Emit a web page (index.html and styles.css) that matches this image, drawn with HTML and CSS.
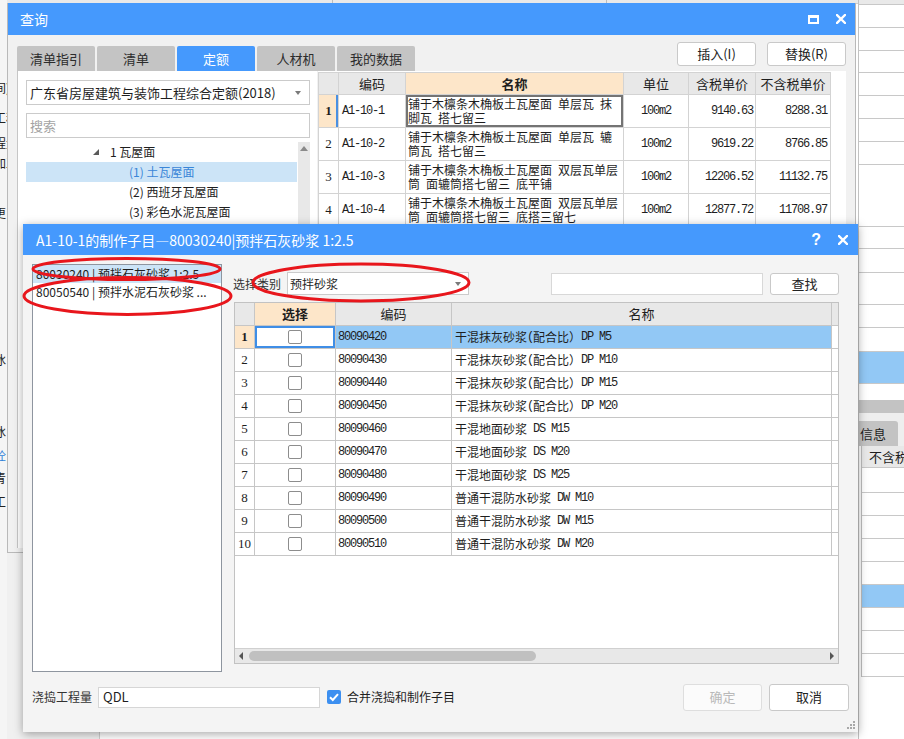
FILE: index.html
```html
<!DOCTYPE html>
<html lang="zh-CN">
<head>
<meta charset="utf-8">
<title>查询</title>
<link rel="stylesheet" href="styles.css">
</head>
<body>
<div class="desk">
  <div class="bg-left">
    <div class="bl l1">间)</div>
    <div class="bl l2">工程</div>
    <div class="bl l3">程量</div>
    <div class="bl l4">加工</div>
    <div class="bl l5">更</div>
    <div class="bl l6">冰</div>
    <div class="bl l7">冰</div>
    <div class="bl l8 blue">砼</div>
    <div class="bl l9">青</div>
    <div class="bl l10">工</div>
  </div>
  <div class="bg-mid">
    <div class="bg-top"><span class="c1"></span><span class="c2"></span></div>
    <div class="bg-fill"><div class="bg-fill-l"></div><div class="bg-fill-r"></div></div>
  </div>
  <div class="bg-right">
    <div class="rw h5 rhead"></div>
    <div class="rw h23"></div>
    <div class="rw h23"></div>
    <div class="rw h22"></div>
    <div class="rw h23"></div>
    <div class="rw h23"></div>
    <div class="rw h23"></div>
    <div class="rw h23"></div>
    <div class="rw h62"></div>
    <div class="rw h22"></div>
    <div class="rw h24"></div>
    <div class="rw h32"></div>
    <div class="rw h23"></div>
    <div class="rw h24"></div>
    <div class="rw h32 rb"></div>
    <div class="rn0 h16"></div>
    <div class="rn0 h13 rbar"></div>
    <div class="rn0 h8 rgap"></div>
    <div class="rtab"><span class="rtl">信息</span></div>
    <div class="rlow">
      <div class="rw h22 rhdr">不含税</div>
      <div class="rw h25"></div>
      <div class="rw h23"></div>
      <div class="rw h23"></div>
      <div class="rw h23"></div>
      <div class="rw h23"></div>
      <div class="rw h23 rb"></div>
      <div class="rw h23"></div>
      <div class="rw h23"></div>
      <div class="rw h23"></div>
    </div>
  </div>
</div>

<section class="win query">
  <header class="tbar qbar">
    <span class="ttl">查询</span>
    <span class="ticons">
      <svg width="11" height="9" viewBox="0 0 11 9"><rect x="1" y="1.5" width="9" height="6.5" fill="none" stroke="#fff" stroke-width="2"/><rect x="0" y="0" width="11" height="3" fill="#fff"/></svg>
      <svg width="10" height="10" viewBox="0 0 10 10"><path d="M1 1L9 9M9 1L1 9" stroke="#fff" stroke-width="2.4" stroke-linecap="square"/></svg>
    </span>
  </header>
  <div class="qbody">
    <div class="qtop">
      <div class="tabs">
        <div class="tab">清单指引</div>
        <div class="tab">清单</div>
        <div class="tab on">定额</div>
        <div class="tab">人材机</div>
        <div class="tab">我的数据</div>
      </div>
      <div class="qbtns">
        <div class="btn qbtn">插入(I)</div>
        <div class="btn qbtn">替换(R)</div>
      </div>
    </div>
    <div class="qmain">
      <div class="qleft">
        <div class="field combo"><span>广东省房屋建筑与装饰工程综合定额(2018)</span><i class="caret"></i></div>
        <div class="field search">搜索</div>
        <div class="tree">
          <div class="tlist">
            <div class="trow lv1"><i class="tri"></i><span>1 瓦屋面</span></div>
            <div class="trow lv2 sel">(1) 土瓦屋面</div>
            <div class="trow lv2">(2) 西班牙瓦屋面</div>
            <div class="trow lv2">(3) 彩色水泥瓦屋面</div>
          </div>
          <div class="vscroll"><i class="up"></i></div>
        </div>
      </div>
      <div class="qgrid">
        <div class="gr ghead">
          <div class="gc q1"></div>
          <div class="gc q2">编码</div>
          <div class="gc q3 peach b">名称</div>
          <div class="gc q4">单位</div>
          <div class="gc q5">含税单价</div>
          <div class="gc q6">不含税单价</div>
        </div>
        <div class="gr qrow">
          <div class="gc q1 rnum cur">1</div>
          <div class="gc q2 lt"><span class="m">A1-10-1</span></div>
          <div class="gc q3 nm focus">铺于木檩条木桷板土瓦屋面&ensp;单层瓦&ensp;抹<br>脚瓦&ensp;搭七留三</div>
          <div class="gc q4"><span class="m">100m2</span></div>
          <div class="gc q5 ra"><span class="m">9140.63</span></div>
          <div class="gc q6 ra"><span class="m">8288.31</span></div>
        </div>
        <div class="gr qrow">
          <div class="gc q1 rnum">2</div>
          <div class="gc q2 lt"><span class="m">A1-10-2</span></div>
          <div class="gc q3 nm">铺于木檩条木桷板土瓦屋面&ensp;单层瓦&ensp;辘<br>筒瓦&ensp;搭七留三</div>
          <div class="gc q4"><span class="m">100m2</span></div>
          <div class="gc q5 ra"><span class="m">9619.22</span></div>
          <div class="gc q6 ra"><span class="m">8766.85</span></div>
        </div>
        <div class="gr qrow">
          <div class="gc q1 rnum">3</div>
          <div class="gc q2 lt"><span class="m">A1-10-3</span></div>
          <div class="gc q3 nm">铺于木檩条木桷板土瓦屋面&ensp;双层瓦单层<br>筒&ensp;面辘筒搭七留三&ensp;底平铺</div>
          <div class="gc q4"><span class="m">100m2</span></div>
          <div class="gc q5 ra"><span class="m">12206.52</span></div>
          <div class="gc q6 ra"><span class="m">11132.75</span></div>
        </div>
        <div class="gr qrow">
          <div class="gc q1 rnum">4</div>
          <div class="gc q2 lt"><span class="m">A1-10-4</span></div>
          <div class="gc q3 nm">铺于木檩条木桷板土瓦屋面&ensp;双层瓦单层<br>筒&ensp;面辘筒搭七留三&ensp;底搭三留七</div>
          <div class="gc q4"><span class="m">100m2</span></div>
          <div class="gc q5 ra"><span class="m">12877.72</span></div>
          <div class="gc q6 ra"><span class="m">11708.97</span></div>
        </div>
      </div>
    </div>
  </div>
</section>

<section class="win dlg">
  <header class="tbar dbar">
    <span class="ttl">A1-10-1的制作子目—80030240|预拌石灰砂浆 1:2.5</span>
    <span class="ticons">
      <span class="help">?</span>
      <svg width="10" height="10" viewBox="0 0 10 10"><path d="M1 1L9 9M9 1L1 9" stroke="#fff" stroke-width="2.4" stroke-linecap="square"/></svg>
    </span>
  </header>
  <div class="dbody">
    <div class="dmain">
      <div class="dlist">
        <div class="li sel">80030240 | 预拌石灰砂浆 1:2.5</div>
        <div class="li">80050540 | 预拌水泥石灰砂浆 ...</div>
      </div>
      <div class="dright">
        <div class="dtool">
          <span class="dlab">选择类别</span>
          <div class="field dcombo"><span>预拌砂浆</span><i class="caret"></i></div>
          <div class="field dsearch"></div>
          <div class="btn dfind">查找</div>
        </div>
        <div class="dgrid">
          <div class="gr dhead">
            <div class="gc d1"></div>
            <div class="gc d2 peach b">选择</div>
            <div class="gc d3">编码</div>
            <div class="gc d4">名称</div>
            <div class="gc d5"></div>
          </div>
          <div class="gr drow">
            <div class="gc d1 rnum cur">1</div>
            <div class="gc d2 dfocus"><i class="cb"></i></div>
            <div class="gc d3 lt hi"><span class="m">80090420</span></div>
            <div class="gc d4 lt hi">干混抹灰砂浆<span class="m">(</span>配合比）<span class="m">DP M5</span></div>
            <div class="gc d5"></div>
          </div>
          <div class="gr drow">
            <div class="gc d1 rnum">2</div>
            <div class="gc d2"><i class="cb"></i></div>
            <div class="gc d3 lt"><span class="m">80090430</span></div>
            <div class="gc d4 lt">干混抹灰砂浆<span class="m">(</span>配合比）<span class="m">DP M10</span></div>
            <div class="gc d5"></div>
          </div>
          <div class="gr drow">
            <div class="gc d1 rnum">3</div>
            <div class="gc d2"><i class="cb"></i></div>
            <div class="gc d3 lt"><span class="m">80090440</span></div>
            <div class="gc d4 lt">干混抹灰砂浆<span class="m">(</span>配合比）<span class="m">DP M15</span></div>
            <div class="gc d5"></div>
          </div>
          <div class="gr drow">
            <div class="gc d1 rnum">4</div>
            <div class="gc d2"><i class="cb"></i></div>
            <div class="gc d3 lt"><span class="m">80090450</span></div>
            <div class="gc d4 lt">干混抹灰砂浆<span class="m">(</span>配合比）<span class="m">DP M20</span></div>
            <div class="gc d5"></div>
          </div>
          <div class="gr drow">
            <div class="gc d1 rnum">5</div>
            <div class="gc d2"><i class="cb"></i></div>
            <div class="gc d3 lt"><span class="m">80090460</span></div>
            <div class="gc d4 lt">干混地面砂浆&ensp;<span class="m">DS M15</span></div>
            <div class="gc d5"></div>
          </div>
          <div class="gr drow">
            <div class="gc d1 rnum">6</div>
            <div class="gc d2"><i class="cb"></i></div>
            <div class="gc d3 lt"><span class="m">80090470</span></div>
            <div class="gc d4 lt">干混地面砂浆&ensp;<span class="m">DS M20</span></div>
            <div class="gc d5"></div>
          </div>
          <div class="gr drow">
            <div class="gc d1 rnum">7</div>
            <div class="gc d2"><i class="cb"></i></div>
            <div class="gc d3 lt"><span class="m">80090480</span></div>
            <div class="gc d4 lt">干混地面砂浆&ensp;<span class="m">DS M25</span></div>
            <div class="gc d5"></div>
          </div>
          <div class="gr drow">
            <div class="gc d1 rnum">8</div>
            <div class="gc d2"><i class="cb"></i></div>
            <div class="gc d3 lt"><span class="m">80090490</span></div>
            <div class="gc d4 lt">普通干混防水砂浆&ensp;<span class="m">DW M10</span></div>
            <div class="gc d5"></div>
          </div>
          <div class="gr drow">
            <div class="gc d1 rnum">9</div>
            <div class="gc d2"><i class="cb"></i></div>
            <div class="gc d3 lt"><span class="m">80090500</span></div>
            <div class="gc d4 lt">普通干混防水砂浆&ensp;<span class="m">DW M15</span></div>
            <div class="gc d5"></div>
          </div>
          <div class="gr drow">
            <div class="gc d1 rnum">10</div>
            <div class="gc d2"><i class="cb"></i></div>
            <div class="gc d3 lt"><span class="m">80090510</span></div>
            <div class="gc d4 lt">普通干混防水砂浆&ensp;<span class="m">DW M20</span></div>
            <div class="gc d5"></div>
          </div>
          <div class="gspace"></div>
          <div class="hscroll"><i class="al"></i><span class="thumb"></span><i class="ar"></i></div>
        </div>
      </div>
    </div>
    <div class="dfoot">
      <span class="flab">浇捣工程量</span>
      <div class="field finput">QDL</div>
      <span class="chk"><svg width="14" height="14" viewBox="0 0 14 14"><path d="M3 7.2l2.8 2.8L11 4.2" fill="none" stroke="#fff" stroke-width="2"/></svg></span>
      <span class="clab">合并浇捣和制作子目</span>
      <div class="dbtns">
        <div class="btn dbtn off">确定</div>
        <div class="btn dbtn">取消</div>
      </div>
    </div>
  </div>
  <svg class="grip" width="8" height="8" viewBox="0 0 8 8"><g fill="#a8a8a8"><rect x="6" y="0" width="2" height="2"/><rect x="3" y="3" width="2" height="2"/><rect x="6" y="3" width="2" height="2"/><rect x="0" y="6" width="2" height="2"/><rect x="3" y="6" width="2" height="2"/><rect x="6" y="6" width="2" height="2"/></g></svg>
</section>

<svg class="marks" width="904" height="739" viewBox="0 0 904 739">
  <g fill="none" stroke="#e8161c" stroke-width="3">
    <ellipse cx="126.5" cy="269" rx="93.5" ry="10.5"/>
    <ellipse cx="127.5" cy="296" rx="103.5" ry="18.5"/>
    <ellipse cx="361" cy="282.5" rx="108" ry="18.5"/>
  </g>
</svg>
</body>
</html>
```

FILE: styles.css
```css
*{box-sizing:border-box;margin:0;padding:0}
html,body{width:904px;height:739px;overflow:hidden}
body{position:relative;font-family:"Noto Sans CJK SC","Microsoft YaHei",sans-serif;font-size:12px;line-height:16px;color:#1e1e1e;background:#fff}
i{display:block;font-style:normal}
.m{font-family:"Liberation Mono","DejaVu Sans Mono",monospace;letter-spacing:-1.2px;font-size:12px}
.b{font-weight:bold}

/* background application */
.desk{display:flex;width:904px;height:739px}
.bg-left{width:7px;flex:none;background:#f5f5f5;overflow:hidden;display:flex;flex-direction:column}
.bl{height:20px;line-height:20px;white-space:nowrap;margin-left:-6px;font-size:12px;color:#222;flex:none}
.bl.blue{color:#2f7fd8}
.l1{margin-top:78px}.l2{margin-top:10px}.l3{margin-top:5px}.l4{margin-top:0}.l5{margin-top:30px}
.l6{margin-top:127px}.l7{margin-top:52px}.l8{margin-top:4px}.l9{margin-top:2px}.l10{margin-top:4px}
.bg-mid{flex:1;display:flex;flex-direction:column}
.bg-top{height:4px;flex:none;background:#e9e9e9;border-bottom:1px solid #cfcfcf;display:flex}
.bg-top span{border-right:1px solid #bcbcbc}
.bg-top .c1{width:326px}.bg-top .c2{width:274px}
.bg-fill{flex:1;display:flex}
.bg-fill-l{width:93px;background:#f0f0f0;border-right:1px solid #cfcfcf}
.bg-fill-r{flex:1;background:#fff}
.bg-right{width:46px;flex:none;background:#fff;border-left:1px solid #c2c2c2;display:flex;flex-direction:column;overflow:hidden}
.rw{flex:none;border-bottom:1px solid #c8c8c8}
.rn0{flex:none}
.h5{height:5px}.h8{height:8px}.h13{height:13px}.h16{height:16px}.h22{height:22px}.h23{height:23px}
.h24{height:24px}.h25{height:25px}.h32{height:32px}.h62{height:62px}
.rhead{background:#e9e9e9}
.rb{background:#92c8f5}
.rbar{background:#c3c3c3}
.rgap{background:#eeeeee}
.rtab{height:25px;flex:none;background:#eeeeee;display:flex}
.rtl{width:39px;background:#c3c3c3;border-radius:0 3px 0 0;font-size:13px;line-height:25px;padding-left:1px;white-space:nowrap}
.rlow{margin-left:2px;border-left:1px solid #bdbdbd;display:flex;flex-direction:column;flex:none}
.rhdr{background:#e8e8e8;font-size:13px;line-height:21px;padding-left:7px;white-space:nowrap}

/* windows */
.win{position:absolute}
.tbar{flex:none;background:#4599fd;color:#fff;display:flex;align-items:center;justify-content:space-between}
.ttl{font-size:14px;line-height:20px;white-space:nowrap}
.ticons{display:flex;align-items:center;gap:17px}
.btn{background:#fff;border:1px solid #c9c9c9;border-radius:3px;display:flex;align-items:center;justify-content:center;font-size:13px;color:#222}
.field{background:#fff;border:1px solid #cbcbcb;display:flex;align-items:center;font-size:13px;white-space:nowrap}
.caret{width:0;height:0;border-left:3.5px solid transparent;border-right:3.5px solid transparent;border-top:4px solid #7a7a7a;margin-left:auto}

/* query window */
.query{left:7px;top:3px;width:849px;height:550px;background:#f1f1f1;border:1px solid #b9b9b9;border-top:none;display:flex;flex-direction:column}
.qbar{height:32px;padding:0 9px 0 12px}
.qbody{flex:1;padding:7px 9px 4px 9px;display:flex;flex-direction:column}
.qtop{height:29px;flex:none;display:flex;justify-content:space-between}
.tabs{display:flex;gap:2px;align-self:flex-end}
.tab{width:78px;height:25px;background:#c4c4c4;border-radius:2px 2px 0 0;font-size:13px;line-height:25px;text-align:center;color:#2c2c2c}
.tab.on{background:#4599fd;color:#fff}
.qbtns{display:flex;gap:11px;align-self:flex-start}
.qbtn{width:79px;height:24px}
.qmain{flex:1;display:flex;gap:1px;min-height:0}
.qleft{width:300px;flex:none;background:#fff;border-left:1px solid #c6c6c6;padding:9px 7px 0 8px;display:flex;flex-direction:column}
.combo{height:25px;padding:0 8px 0 3px}
.search{height:25px;margin-top:8px;padding-left:3px;color:#a3a3a3}
.tree{margin-top:4px;flex:1;display:flex}
.tlist{width:271px}
.trow{height:20px;line-height:20px;font-size:12px;display:flex;align-items:center;white-space:nowrap}
.lv1{padding-left:67px}
.lv2{padding-left:103px}
.trow.sel{background:#cce4f7;color:#3a86d8}
.tri{width:0;height:0;border-left:6px solid transparent;border-bottom:6px solid #5a5a5a;margin-right:11px}
.vscroll{width:12px;margin-left:1px;background:#e8e8e8}
.up{width:0;height:0;border-left:4px solid transparent;border-right:4px solid transparent;border-bottom:5px solid #8a8a8a;margin:4px auto 0}
.qgrid{flex:1;background:#fff;padding-top:1px;overflow:hidden}

/* grid rows */
.gr{display:flex}
.gc{flex:none;border-right:1px solid #d3d3d3;border-bottom:1px solid #d3d3d3;display:flex;align-items:center;justify-content:center;white-space:nowrap;overflow:hidden}
.ghead{height:23px}
.ghead .gc{background:#e8e8e8;font-size:13px;border-top:1px solid #d3d3d3}
.peach{background:#fde6c9 !important}
.qrow{height:33px}
.q1{width:21px;border-left:1px solid #d3d3d3}.q2{width:67px}.q3{width:218px}.q4{width:65px}.q5{width:67px}.q6{width:75px}
.lt{justify-content:flex-start;padding-left:3px}
.ra{justify-content:flex-end;padding-right:2px}
.q6.ra{padding-right:3px}
.nm{justify-content:flex-start;padding-left:2px;line-height:14px;font-size:12px;white-space:normal}
.rnum{font-family:"Liberation Serif","DejaVu Serif",serif;font-size:13px}
.rnum.cur{background:#fde6c9;font-weight:bold}
.qrow .rnum.cur{box-shadow:inset -2px 0 0 #4a90e2}
.focus{box-shadow:inset 0 0 0 2px #747474}

/* dialog */
.dlg{left:23px;top:224px;width:835px;height:508px;background:#f4f4f4;box-shadow:0 2px 9px rgba(0,0,0,.35);display:flex;flex-direction:column}
.dbar{height:31px;padding:0 10px 0 13px}
.help{font-size:16px;font-weight:bold;line-height:20px;font-family:"Liberation Sans",sans-serif}
.dbody{flex:1;padding:9px 9px 0 9px;display:flex;flex-direction:column}
.dmain{display:flex;height:408px;flex:none}
.dlist{width:190px;flex:none;border:1px solid #8e959f;background:#fff}
.li{height:18px;line-height:18px;padding-left:3px;white-space:nowrap;font-size:12px;overflow:hidden}
.li.sel{background:#cce4f7}
.dright{margin-left:11px;width:606px;display:flex;flex-direction:column}
.dtool{margin-top:8px;height:23px;display:flex;align-items:center}
.dlab{width:54px;font-size:12px;color:#333}
.dcombo{width:182px;height:23px;padding:0 7px 0 2px;font-size:12px}
.dsearch{margin-left:auto;width:212px;height:22px;border-color:#d8d8d8}
.dfind{margin-left:7px;width:69px;height:22px}
.dgrid{margin-top:7px;margin-left:1px;height:362px;flex:none;border:1px solid #c2c2c2;background:#fff;display:flex;flex-direction:column}
.dhead{height:23px;flex:none}
.dhead .gc{background:#e8e8e8;font-size:13px;border-color:#c6c6c6}
.drow{height:23px;flex:none}
.drow .gc{border-color:#c6c6c6}
.d1{width:20px}.d2{width:81px}.d3{width:116px}.d4{width:380px}.d5{flex:1;border-right:none}
.d3.lt{padding-left:2px}
.d4.lt{padding-left:3px;font-size:12px}
.hi{background:#92c8f5}
.dfocus{box-shadow:inset 0 0 0 2px #3f8ee6}
.cb{width:14px;height:14px;border:1px solid #8d8d8d;border-radius:2px;background:#fff}
.gspace{flex:1}
.hscroll{height:15px;flex:none;background:#e8e8e8;border-top:1px solid #d0d0d0;display:flex;align-items:center}
.al{width:0;height:0;border-top:4px solid transparent;border-bottom:4px solid transparent;border-right:4px solid #555;margin-left:4px}
.thumb{margin-left:6px;width:287px;height:10px;border-radius:5px;background:#c0c0c0}
.ar{width:0;height:0;border-top:4px solid transparent;border-bottom:4px solid transparent;border-left:4px solid #555;margin-left:auto;margin-right:4px}
.dfoot{margin-top:11px;height:28px;flex:none;display:flex;align-items:center}
.flab{width:66px;font-size:12px;color:#333}
.finput{width:222px;height:21px;padding-left:4px;border-color:#d6d6d6}
.chk{margin-left:7px;width:14px;height:14px;background:#3c8ff0;border-radius:2px;display:flex}
.clab{margin-left:6px;font-size:12px}
.dbtns{margin-left:auto;display:flex;gap:7px}
.dbtn{width:80px;height:27px}
.dbtn.off{width:79px;color:#b9b9b9;border-color:#dedede;background:#fbfbfb}
.grip{position:absolute;right:3px;bottom:3px}

.marks{position:absolute;left:0;top:0;pointer-events:none}
```
